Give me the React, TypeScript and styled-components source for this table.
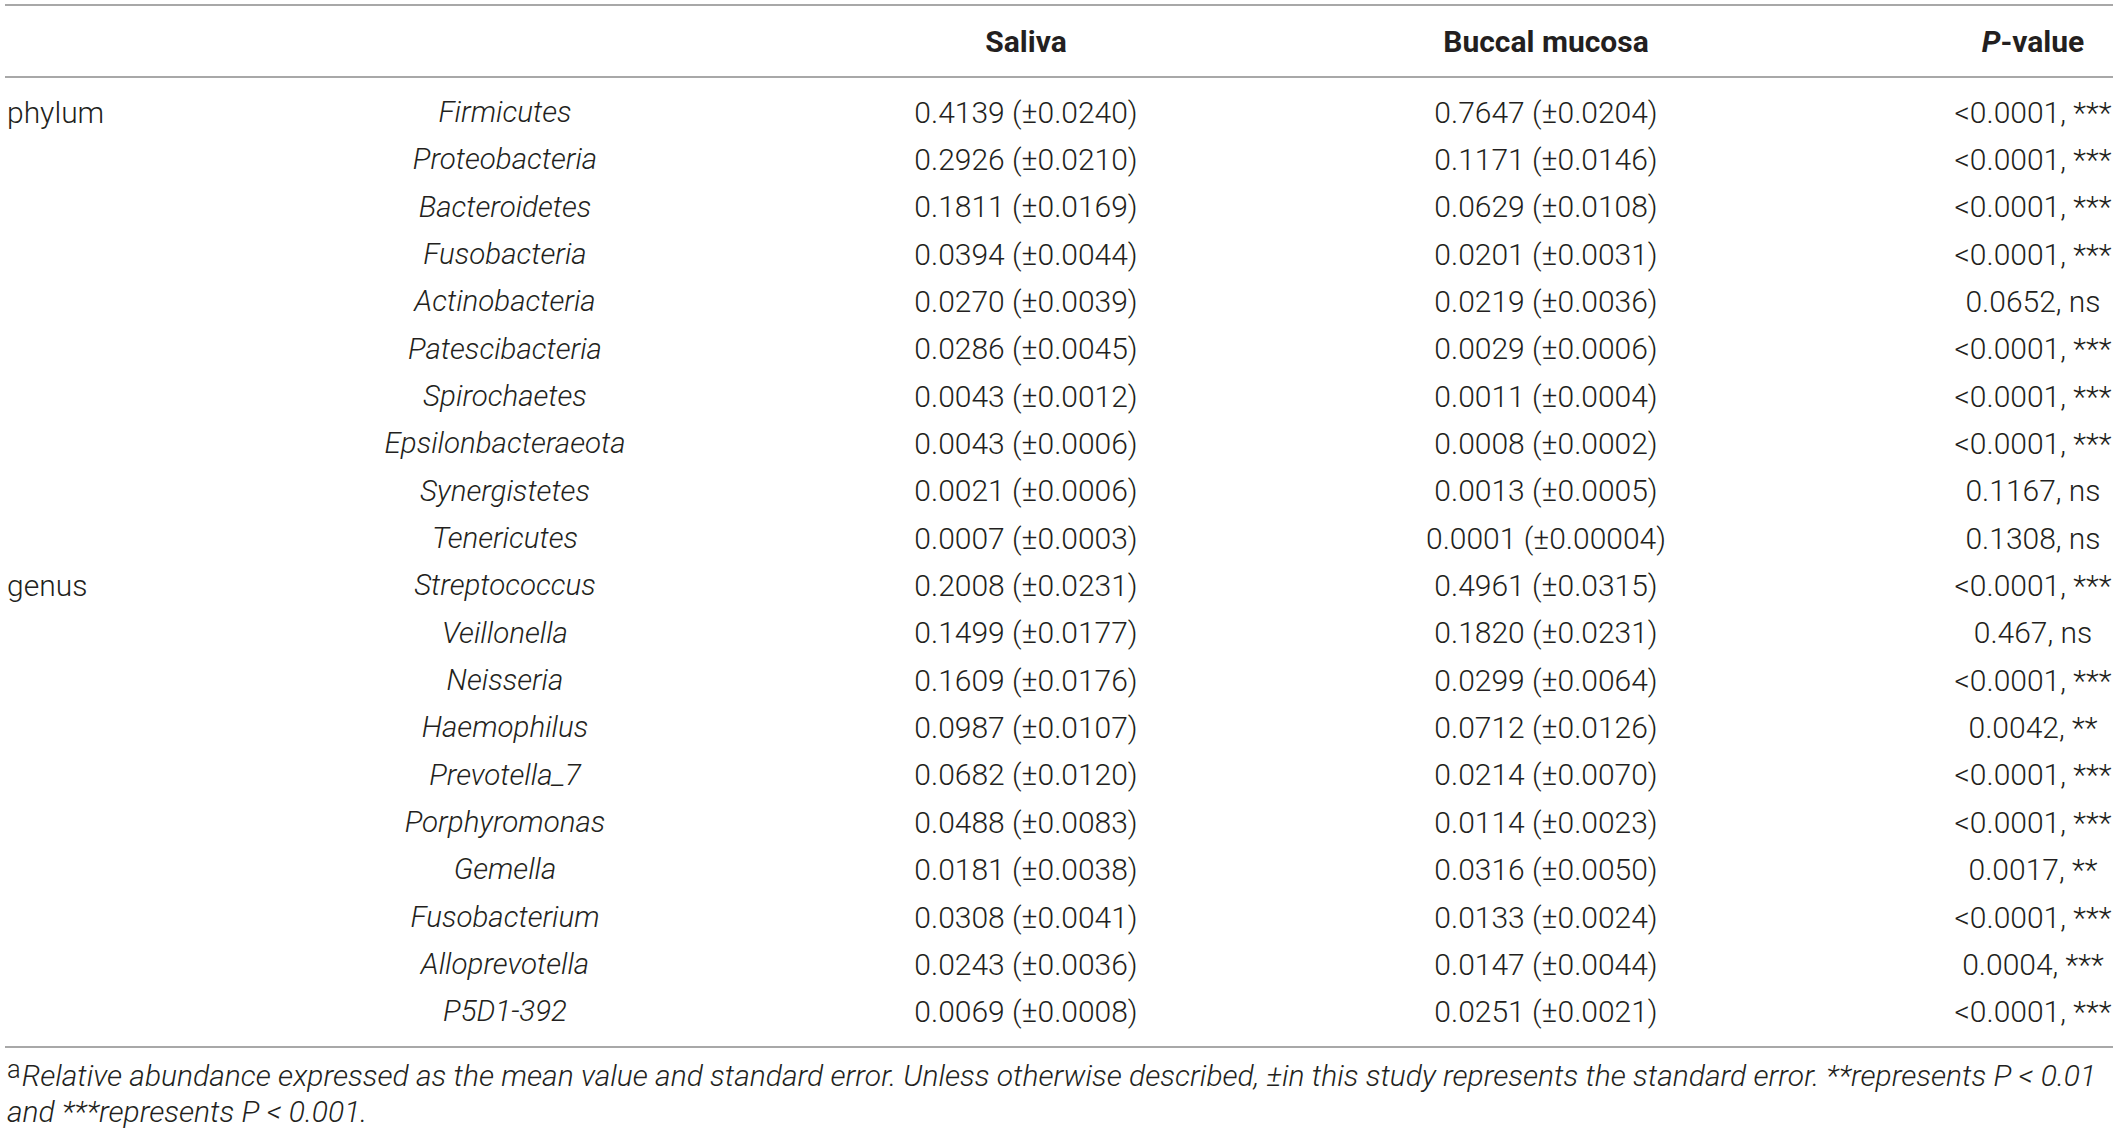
import React from "react";
import styled, { createGlobalStyle } from "styled-components";

const Global = createGlobalStyle`
  html, body { margin: 0; padding: 0; background: #ffffff; }
  body {
    font-family: Roboto, "Liberation Sans", Arial, sans-serif;
    font-weight: 300;
    color: #231f20;
  }
`;

const COLS = "245px 510px 532px 508px 1fr";

const Page = styled.div`
  width: 2108px;
  margin: 4px 0 0 5px;
`;

const Table = styled.div`
  border-top: 2px solid #a8a8a8;
  border-bottom: 2px solid #a8a8a8;
`;

const HeadRow = styled.div`
  display: grid;
  grid-template-columns: ${COLS};
  align-items: center;
  height: 70px;
  border-bottom: 2px solid #a8a8a8;
  font-size: 30px;
  font-weight: 700;
`;

const Body = styled.div`
  padding: 11px 0 10px;
`;

const Row = styled.div`
  display: grid;
  grid-template-columns: ${COLS};
  align-items: center;
  height: 47.35px;
  font-size: 30px;
  line-height: 1;
`;

const Group = styled.div`
  padding-left: 2px;
  text-align: left;
  white-space: nowrap;
`;

const Cell = styled.div<{ $italic?: boolean; $pcol?: boolean }>`
  text-align: center;
  white-space: nowrap;
  font-style: ${(p) => (p.$italic ? "italic" : "normal")};
  font-size: ${(p) => (p.$italic ? "29.5px" : "30px")};
  padding-left: ${(p) => (p.$pcol ? "153px" : "0")};
`;

const Foot = styled.p`
  margin: 0;
  padding: 10px 0 0 2px;
  font-size: 30px;
  line-height: 36px;
  font-style: italic;
`;

const Sup = styled.sup`
  font-style: normal;
  font-size: 0.85em;
  vertical-align: 0.3em;
  line-height: 0;
  margin-right: 1px;
`;

type R = [string, string, string, string, string];

const rows: R[] = [
  ["phylum", "Firmicutes", "0.4139 (±0.0240)", "0.7647 (±0.0204)", "<0.0001, ***"],
  ["", "Proteobacteria", "0.2926 (±0.0210)", "0.1171 (±0.0146)", "<0.0001, ***"],
  ["", "Bacteroidetes", "0.1811 (±0.0169)", "0.0629 (±0.0108)", "<0.0001, ***"],
  ["", "Fusobacteria", "0.0394 (±0.0044)", "0.0201 (±0.0031)", "<0.0001, ***"],
  ["", "Actinobacteria", "0.0270 (±0.0039)", "0.0219 (±0.0036)", "0.0652, ns"],
  ["", "Patescibacteria", "0.0286 (±0.0045)", "0.0029 (±0.0006)", "<0.0001, ***"],
  ["", "Spirochaetes", "0.0043 (±0.0012)", "0.0011 (±0.0004)", "<0.0001, ***"],
  ["", "Epsilonbacteraeota", "0.0043 (±0.0006)", "0.0008 (±0.0002)", "<0.0001, ***"],
  ["", "Synergistetes", "0.0021 (±0.0006)", "0.0013 (±0.0005)", "0.1167, ns"],
  ["", "Tenericutes", "0.0007 (±0.0003)", "0.0001 (±0.00004)", "0.1308, ns"],
  ["genus", "Streptococcus", "0.2008 (±0.0231)", "0.4961 (±0.0315)", "<0.0001, ***"],
  ["", "Veillonella", "0.1499 (±0.0177)", "0.1820 (±0.0231)", "0.467, ns"],
  ["", "Neisseria", "0.1609 (±0.0176)", "0.0299 (±0.0064)", "<0.0001, ***"],
  ["", "Haemophilus", "0.0987 (±0.0107)", "0.0712 (±0.0126)", "0.0042, **"],
  ["", "Prevotella_7", "0.0682 (±0.0120)", "0.0214 (±0.0070)", "<0.0001, ***"],
  ["", "Porphyromonas", "0.0488 (±0.0083)", "0.0114 (±0.0023)", "<0.0001, ***"],
  ["", "Gemella", "0.0181 (±0.0038)", "0.0316 (±0.0050)", "0.0017, **"],
  ["", "Fusobacterium", "0.0308 (±0.0041)", "0.0133 (±0.0024)", "<0.0001, ***"],
  ["", "Alloprevotella", "0.0243 (±0.0036)", "0.0147 (±0.0044)", "0.0004, ***"],
  ["", "P5D1-392", "0.0069 (±0.0008)", "0.0251 (±0.0021)", "<0.0001, ***"],
];

export default function App() {
  return (
    <>
      <Global />
      <Page>
        <Table>
          <HeadRow>
            <Group />
            <Cell />
            <Cell>Saliva</Cell>
            <Cell>Buccal mucosa</Cell>
            <Cell $pcol>
              <i>P</i>-value
            </Cell>
          </HeadRow>
          <Body>
            {rows.map((r, i) => (
              <Row key={i}>
                <Group>{r[0]}</Group>
                <Cell $italic>{r[1]}</Cell>
                <Cell>{r[2]}</Cell>
                <Cell>{r[3]}</Cell>
                <Cell $pcol>{r[4]}</Cell>
              </Row>
            ))}
          </Body>
        </Table>
        <Foot>
          <Sup>a</Sup>Relative abundance expressed as the mean value and standard error. Unless
          otherwise described, ±in this study represents the standard error. **represents P &lt;
          0.01 and ***represents P &lt; 0.001.
        </Foot>
      </Page>
    </>
  );
}
